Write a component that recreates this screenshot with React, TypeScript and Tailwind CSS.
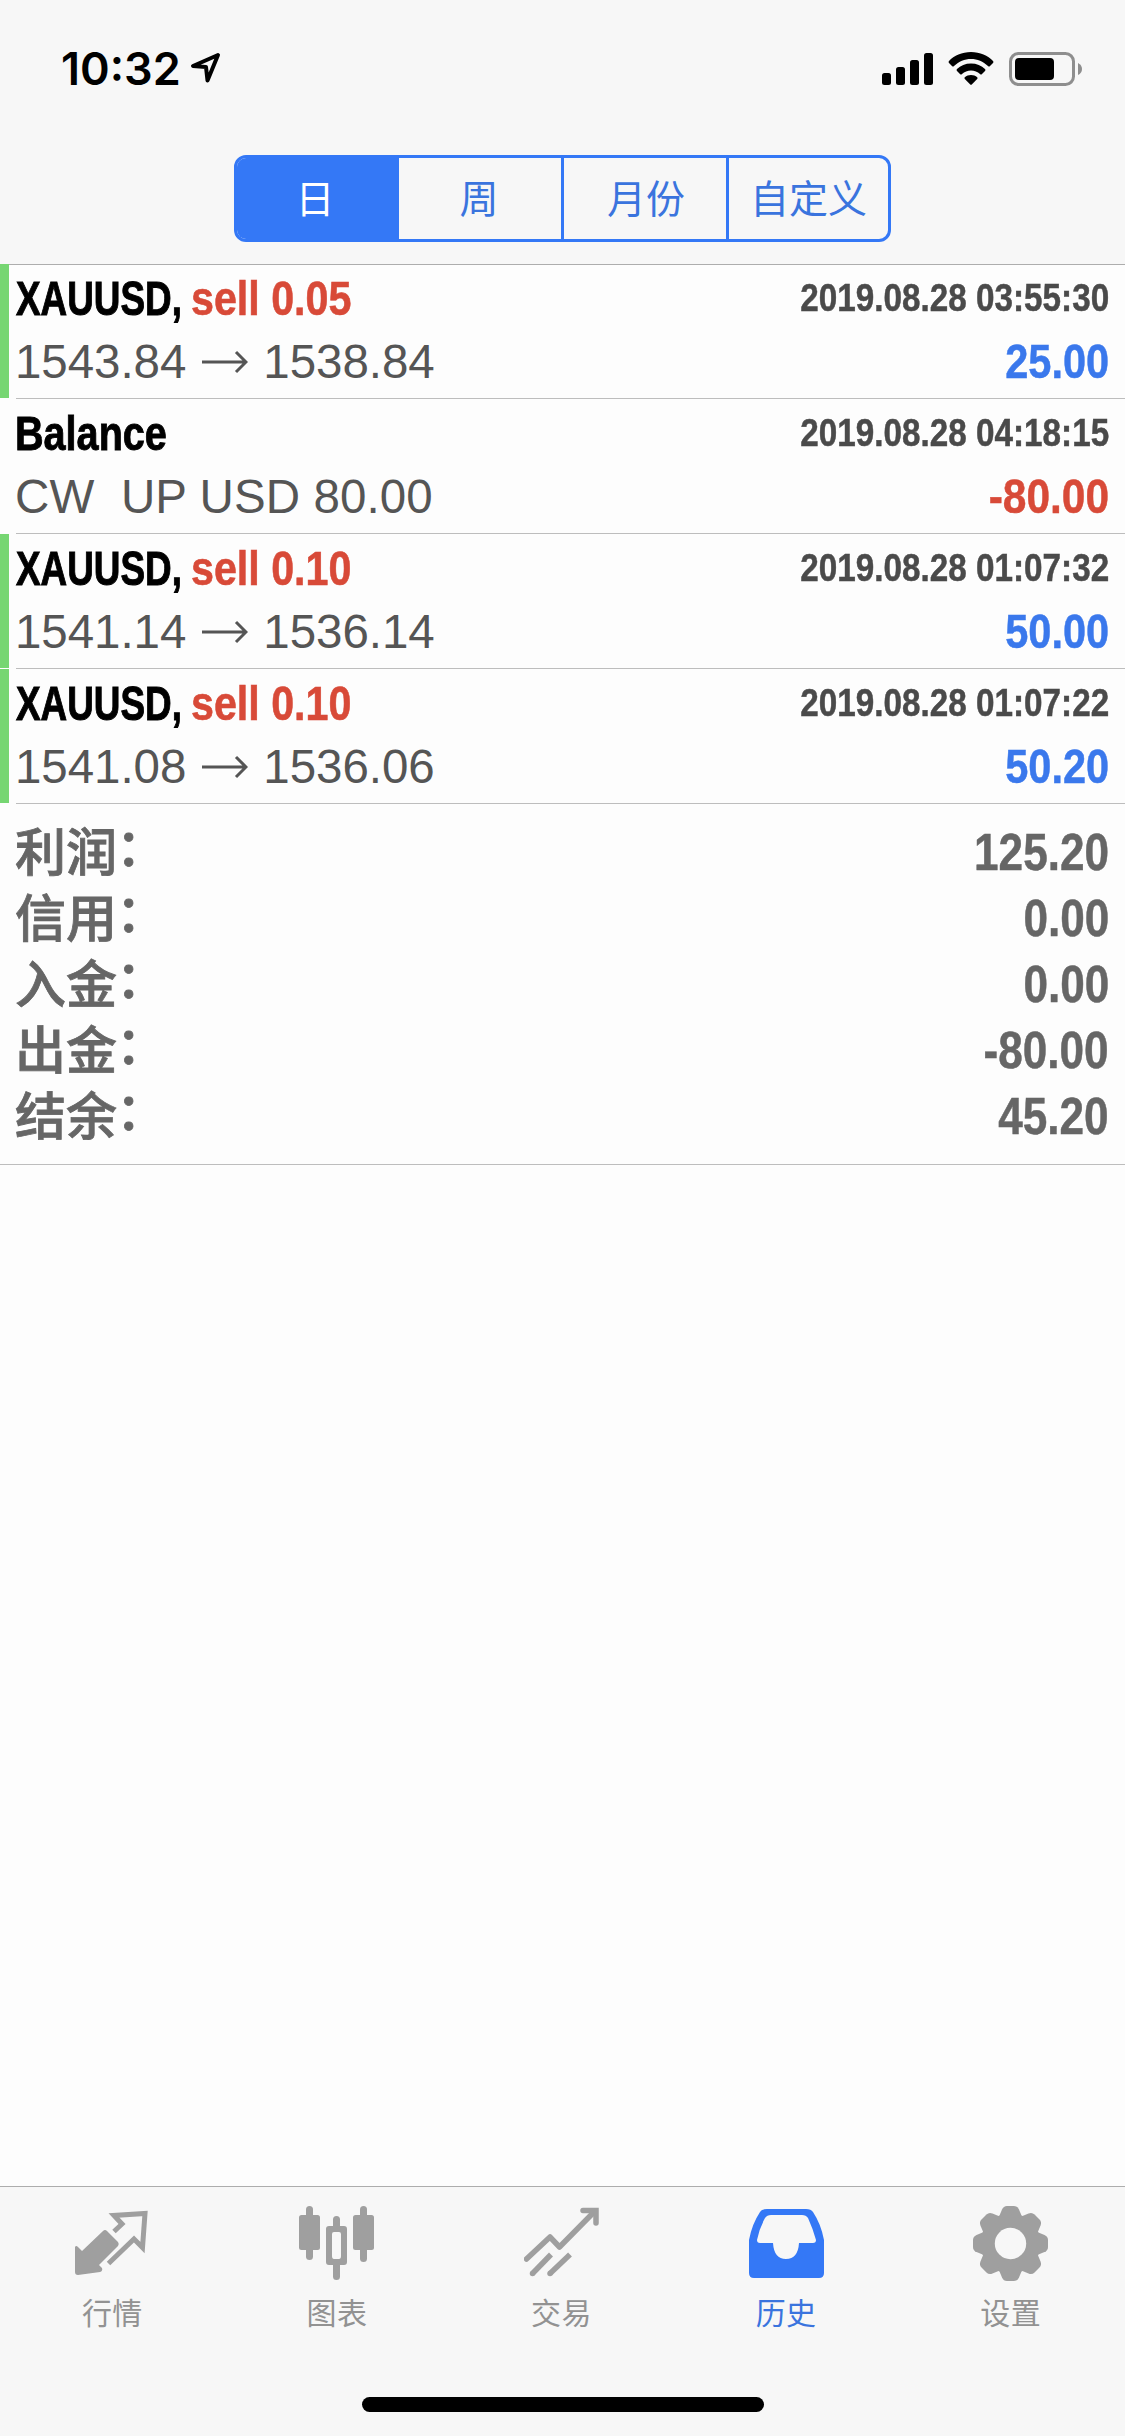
import React from "react";

const BOLD = "font-['Liberation_Sans',sans-serif] font-bold whitespace-nowrap leading-none [-webkit-text-stroke:0.5px]";
const CJK = "font-['Noto_Sans_CJK_SC',sans-serif]";

type Deal = {
  title: string;
  action?: string;
  time: string;
  detail: string;
  to?: string;
  profit: string;
  negative?: boolean;
};

const deals: Deal[] = [
  { title: "XAUUSD,", action: "sell 0.05", time: "2019.08.28 03:55:30", detail: "1543.84", to: "1538.84", profit: "25.00" },
  { title: "Balance", time: "2019.08.28 04:18:15", detail: "CW  UP USD 80.00", profit: "-80.00", negative: true },
  { title: "XAUUSD,", action: "sell 0.10", time: "2019.08.28 01:07:32", detail: "1541.14", to: "1536.14", profit: "50.00" },
  { title: "XAUUSD,", action: "sell 0.10", time: "2019.08.28 01:07:22", detail: "1541.08", to: "1536.06", profit: "50.20" },
];

const totals = [
  ["利润", "125.20"],
  ["信用", "0.00"],
  ["入金", "0.00"],
  ["出金", "-80.00"],
  ["结余", "45.20"],
];

function StatusBar() {
  return (
    <div className="flex h-[155px] items-start justify-between pr-[43px] pl-[61px]">
      <div className="mt-[45px] flex h-12 items-start">
        <span className="font-['Inter',sans-serif] text-[45px] leading-[48px] font-semibold">10:32</span>
        <svg className="mt-[7px] ml-[9px] h-[31px] w-[31px]" viewBox="0 0 31 31" fill="none" stroke="#000" strokeWidth="4" strokeLinejoin="round">
          <path d="M28 3 L3 14 L16 15 L17.500 28.500 Z" />
        </svg>
      </div>
      <div className="mt-[52px] flex h-[34px] items-start">
        <svg className="h-[34px] w-[51px]" viewBox="0 0 51 34">
          <rect x="0" y="21" width="9" height="12" rx="2.500" />
          <rect x="14" y="15" width="9" height="18" rx="2.500" />
          <rect x="28" y="8" width="9" height="25" rx="2.500" />
          <rect x="42" y="1" width="9" height="32" rx="2.500" />
        </svg>
        <svg className="ml-[15px] h-[34px] w-[46px]" viewBox="0 0 46 34">
          <path d="M23 0 C32 0 40 3.500 45 9 Q46 10 45 11 L42 14 Q41 15 40 14 C35 9.500 29.500 7 23 7 C16.500 7 11 9.500 6 14 Q5 15 4 14 L1 11 Q0 10 1 9 C6 3.500 14 0 23 0 Z" />
          <path d="M23 11.500 C28.500 11.500 33.500 13.500 37 17 Q38 18 37 19 L34 22 Q33 23 32 22 C29.500 19.800 26.500 18.500 23 18.500 C19.500 18.500 16.500 19.800 14 22 Q13 23 12 22 L9 19 Q8 18 9 17 C12.500 13.500 17.500 11.500 23 11.500 Z" />
          <path d="M23 23 C25.500 23 27.500 23.800 29.200 25.200 Q30 26 29.200 27 L24 32.300 Q23 33.300 22 32.300 L16.800 27 Q16 26 16.800 25.200 C18.500 23.800 20.500 23 23 23 Z" />
        </svg>
        <svg className="ml-[15px] h-[34px] w-[73px]" viewBox="0 0 73 34">
          <rect x="1.500" y="1.500" width="63" height="31" rx="8" fill="none" stroke="#8e8e8e" strokeWidth="3" />
          <rect x="6" y="6" width="39" height="22" rx="4" />
          <path d="M69 11 Q73 13 73 17 Q73 21 69 23 Z" fill="#8e8e8e" />
        </svg>
      </div>
    </div>
  );
}

function Segments() {
  return (
    <div className={`mx-auto grid h-[87px] w-[657px] grid-cols-[159px_165px_165px_162px] overflow-hidden rounded-xl border-[3px] border-[#3478f6] text-[39px] leading-none text-[#3a74de] ${CJK}`}>
      <div className="flex items-center justify-center bg-[#3478f6] pr-[3px] pb-[5px] text-white">日</div>
      <div className="flex items-center justify-center border-l-[3px] border-[#3478f6] pr-0.5 pb-[5px]">周</div>
      <div className="flex items-center justify-center border-l-[3px] border-[#3478f6] pb-[5px] pl-0.5">月份</div>
      <div className="flex items-center justify-center border-l-[3px] border-[#3478f6] pb-[5px]">自定义</div>
    </div>
  );
}

function DealRow({ d }: { d: Deal }) {
  return (
    <div className="flex h-[135px]">
      <div className={d.action ? "mb-px w-[9px] bg-[#76d672]" : "w-[9px]"} />
      <div className="ml-[7px] flex-1 border-b border-[#bdbdbd] pr-4">
        <div className="flex h-[66px] items-center justify-between pt-[3px]">
          <div className={`flex text-[48px] text-black ${BOLD}`}>
            {d.action ? (
              <>
                <div className="w-[175px]">
                  <span className="inline-block origin-left scale-x-[0.768] [-webkit-text-stroke:1px]">{d.title}</span>
                </div>
                <span className="inline-block origin-left scale-x-[0.858] text-[#d84a38] [-webkit-text-stroke:0.6px]">{d.action}</span>
              </>
            ) : (
              <span className="-ml-px inline-block origin-left scale-x-[0.825] [-webkit-text-stroke:0.9px]">{d.title}</span>
            )}
          </div>
          <div className={`origin-right scale-x-[0.853] pb-0.5 text-[39px] text-[#4a4a4a] ${BOLD}`}>{d.time}</div>
        </div>
        <div className="flex h-[64px] items-center justify-between">
          <div
            className={`-ml-px flex items-center font-['Liberation_Sans',sans-serif] text-[47.500px] leading-none whitespace-pre text-[#555] ${d.to ? "tracking-[-0.05px]" : "tracking-[0.1px]"}`}
          >
            {d.detail}
            {d.to && (
              <>
                <svg className="mr-[15px] ml-4 h-6 w-[46px]" viewBox="0 0 46 24" fill="none" stroke="#555" strokeWidth="3">
                  <path d="M0 12 H44 M34 2 L44 12 L34 22" />
                </svg>
                {d.to}
              </>
            )}
          </div>
          <div className={`origin-right text-[48px] ${BOLD} ${d.negative ? "scale-x-[0.885] text-[#d84a38]" : "scale-x-[0.865] text-[#3a78ec]"}`}>{d.profit}</div>
        </div>
      </div>
    </div>
  );
}

const QuotesIcon = () => (
  <svg className="h-[75px] w-[75px]" viewBox="0 0 75 75" fill="#9f9f9f">
    <path d="M28 25 Q30 23 32 25 L43 36 Q44.500 38 43 40 L24 59 L27 62 Q28 65 25 66 L3 69 Q0 69 0 66 L0 41 Q1 39 3 41 L7 45 Z" />
    <path d="M39 25.500 L47 18 L39 9.500 L70 7.500 L67.500 41.500 L59 33 L33.500 57.500" fill="none" stroke="#9f9f9f" strokeWidth="5" />
  </svg>
);

const ChartIcon = () => (
  <svg className="h-[75px] w-[75px]" viewBox="0 0 75 75" fill="#9f9f9f">
    <rect x="7" y="0" width="7" height="54" rx="3.500" />
    <rect x="0" y="9" width="21" height="35" rx="2.500" />
    <rect x="61" y="0" width="7" height="56" rx="3.500" />
    <rect x="54" y="9" width="21" height="35" rx="2.500" />
    <path d="M34 20 V13.500 a3.500 3.500 0 0 1 7 0 V20 H45 q3 0 3 3 V56 q0 3 -3 3 H41 V70.500 a3.500 3.500 0 0 1 -7 0 V59 H30 q-3 0 -3 -3 V23 q0 -3 3 -3 Z M35 26 q-2 0 -2 2 V50 q0 3 2 3 H40 q2 0 2 -3 V28 q0 -2 -2 -2 Z" fillRule="evenodd" />
  </svg>
);

const TradeIcon = () => (
  <svg className="h-[75px] w-[75px]" viewBox="0 0 75 75" fill="none" stroke="#9f9f9f" strokeWidth="5.500">
    <path d="M2.500 53 L26 31 L35.500 41 L71 5" strokeLinejoin="round" strokeLinecap="round" />
    <path d="M59 4.500 H72 V17" strokeLinecap="round" />
    <path d="M27 48.500 L8.500 67.500" />
    <path d="M46 48.500 L26 67.500" />
    <circle cx="8.500" cy="67.500" r="2.750" fill="#9f9f9f" stroke="none" />
    <circle cx="26" cy="67.500" r="2.750" fill="#9f9f9f" stroke="none" />
  </svg>
);

const HistoryIcon = () => (
  <svg className="h-[75px] w-[75px]" viewBox="0 0 75 75" fill="#3478f6">
    <path fillRule="evenodd" d="M18 3 H57 Q62 3 64 6 Q72 18 75 34 V67 Q75 72 70 72 H5 Q0 72 0 67 V34 Q3 18 11 6 Q13 3 18 3 Z M22 9 Q18 9 16 12 Q10 23 8 34 Q8 37 11 37 H24 Q25 53 37 53 Q49 53 50 37 H64 Q67 37 67 34 Q64 23 59 12 Q57 9 53 9 Z" />
  </svg>
);

const SettingsIcon = () => (
  <svg className="h-[75px] w-[75px]" viewBox="0 0 75 75" fill="#9f9f9f">
    <mask id="gear-hole">
      <rect width="75" height="75" fill="#fff" />
      <circle cx="37.500" cy="37.500" r="15.700" fill="#000" />
    </mask>
    <g mask="url(#gear-hole)">
      <circle cx="37.500" cy="37.500" r="30" />
      {[0, 45, 90, 135, 180, 225, 270, 315].map((a) => (
        <path key={a} transform={`rotate(${a} 37.500 37.500)`} d="M25.500 12 L29 3.500 Q30.500 0 34 0 H41 Q44.500 0 46 3.500 L49.500 12 Z" />
      ))}
    </g>
  </svg>
);

const tabs = [
  { label: "行情", Icon: QuotesIcon },
  { label: "图表", Icon: ChartIcon },
  { label: "交易", Icon: TradeIcon },
  { label: "历史", Icon: HistoryIcon, active: true },
  { label: "设置", Icon: SettingsIcon },
];

export default function App() {
  return (
    <div className="flex h-[2436px] w-[1125px] flex-col bg-[#fdfdfd]">
      <header className="h-[265px] border-b border-[#adadad] bg-[#f7f7f7]">
        <StatusBar />
        <Segments />
      </header>
      <main className="-mt-px flex-1">
        {deals.map((d) => (
          <DealRow key={d.time} d={d} />
        ))}
        <section className="h-[361px] border-b border-[#bdbdbd] pt-[15px] pr-4 pl-[15px]">
          {totals.map(([label, value]) => (
            <div key={label} className="flex h-[66px] items-center justify-between text-[#666]">
              <div className={`flex pb-[5px] text-[51px] leading-none font-medium [-webkit-text-stroke:0.8px] ${CJK}`}>
                <span>{label}</span>
                <span className="-mt-[5px] -ml-px">：</span>
              </div>
              <span className={`origin-right scale-x-[0.865] text-[51px] ${BOLD}`}>{value}</span>
            </div>
          ))}
        </section>
      </main>
      <footer className="flex h-[250px] flex-col border-t border-[#adadad] bg-[#f7f7f7]">
        <nav className="mr-0.5 grid grid-cols-5 pt-[19px]">
          {tabs.map(({ label, Icon, active }) => (
            <div key={label} className="flex flex-col items-center">
              <Icon />
              <span className={`mt-[15px] text-[30px] leading-[30px] tracking-[0.4px] ${CJK} ${active ? "text-[#3a74de]" : "text-[#929292]"}`}>{label}</span>
            </div>
          ))}
        </nav>
        <div className="mx-auto mt-auto mb-6 h-[15px] w-[402px] rounded-full bg-black" />
      </footer>
    </div>
  );
}
